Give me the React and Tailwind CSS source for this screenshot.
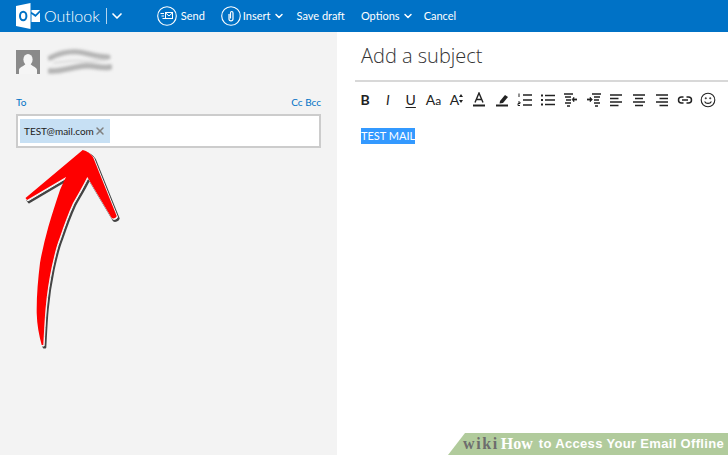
import React from "react";
import { ChevronDown, X } from "lucide-react";

const font = { fontFamily: 'Lato, "Liberation Sans", sans-serif' };
const openSans = { fontFamily: '"Open Sans", "Liberation Sans", sans-serif' };
const serif = { fontFamily: '"Liberation Serif", serif' };

function Logo() {
  return (
    <svg width="24" height="28" viewBox="0 0 24 28" className="shrink-0">
      <path d="M0 4 L14.5 1 V27 L0 24Z" fill="#fff" />
      <path d="M15.5 8 H24 L19.5 12.5 L15.5 10Z" fill="#fff" />
      <path d="M15.5 12 L19.5 15 L24 10.5 V20 H15.5Z" fill="#fff" />
      <ellipse cx="7.2" cy="14" rx="3.2" ry="4.3" fill="none" stroke="#0072c6" strokeWidth="2" />
    </svg>
  );
}

function SendIcon() {
  return (
    <svg width="20" height="20" viewBox="0 0 20 20" fill="none" stroke="#fff" className="shrink-0">
      <circle cx="10" cy="10" r="9.3" strokeWidth="1.1" />
      <rect x="8.5" y="6.5" width="7" height="6" strokeWidth="1" />
      <path d="M8.5 6.8 L12 10 L15.5 6.8 M3.5 7.5H7M4.5 10H7M5.5 12.5H8" strokeWidth="1" />
    </svg>
  );
}

function ClipIcon() {
  return (
    <svg width="20" height="20" viewBox="0 0 20 20" fill="none" stroke="#fff" className="shrink-0">
      <circle cx="10" cy="10" r="9.3" strokeWidth="1.1" />
      <path d="M8 8 V13 C8 15.4 12 15.4 12 13 V7 C12 5 9.5 5 9.5 7 V12.5" strokeWidth="1.2" />
    </svg>
  );
}

function Header() {
  return (
    <header className="h-8 bg-[#0072c6] flex items-center text-white text-[11px] shrink-0 pl-4">
      <Logo />
      <span className="ml-1 text-base font-light">Outlook</span>
      <span className="ml-1.5 w-px h-4 bg-white/70" />
      <ChevronDown className="ml-0.5 w-4 h-4" strokeWidth={2.5} />
      <span className="ml-8 flex items-center gap-1"><SendIcon /><span>Send</span></span>
      <span className="ml-4 flex items-center gap-0.5"><ClipIcon /><span>Insert</span><ChevronDown className="w-3 h-3" strokeWidth={3} /></span>
      <span className="ml-3">Save draft</span>
      <span className="ml-4 flex items-center gap-0.5"><span>Options</span><ChevronDown className="w-3 h-3" strokeWidth={3} /></span>
      <span className="ml-2.5">Cancel</span>
    </header>
  );
}

function Avatar() {
  return (
    <svg width="24" height="24" viewBox="0 0 24 24" className="shrink-0">
      <rect width="24" height="24" fill="#8a8a8a" />
      <ellipse cx="12" cy="9.5" rx="4.6" ry="5.5" fill="#f5f5f5" />
      <path d="M3 24 V20 C3 17 8 16.5 9.5 14 H14.5 C16 16.5 21 17 21 20 V24Z" fill="#f5f5f5" />
    </svg>
  );
}

function Smudge() {
  return (
    <svg width="64" height="28" viewBox="0 0 64 28" className="blur-[1.5px]" fill="none" stroke="#b4b4b4" strokeLinecap="round">
      <path d="M2 10 C10 6 18 3 30 4 C40 5 48 9 60 9" strokeWidth="5" />
      <path d="M6 15 C16 14 24 12 36 13 C44 14 50 12 58 12" strokeWidth="1.5" stroke="#d4d4d4" />
      <path d="M2 23 C12 24 24 19 36 18 C46 17 54 21 62 19" strokeWidth="5.5" />
    </svg>
  );
}

function Arrow() {
  const d = "M82.7 150 C87 151 91 154 93 157 L116.7 216 C116.5 218 113 219 111.7 218 L87.3 177 C83 186 78 194 73 203 C68 214 64 225 60 237 C56 247 54 257 51.7 267 C49 280 47 293 45.7 307 C44.5 320 44 333 43.3 345 L41.7 345 C39 335 37 325 36.7 313 C36.5 296 38 280 40 263 C42 251 45 239 48.3 227 C52 214 56 202 60 190 C62 185 64 181 66 177 L27 200 L25.5 198 Z";
  return (
    <svg className="absolute left-0 top-0 pointer-events-none" width="140" height="360" viewBox="0 0 140 360" fill="none">
      <path d={d} fill="#444" stroke="#444" strokeWidth="2" strokeLinejoin="round" transform="translate(2 2.5)" />
      <path d={d} fill="#f7f7f7" stroke="#f7f7f7" strokeWidth="1" strokeLinejoin="round" transform="translate(0.8 1)" />
      <path d={d} fill="#fe0000" />
    </svg>
  );
}

function Glyph({ children }) {
  return <span className="w-4 h-4 flex items-center justify-center shrink-0 text-[#222]">{children}</span>;
}

function Icon({ children }) {
  return (
    <svg width="16" height="16" viewBox="0 0 16 16" fill="none" stroke="#222" strokeWidth="1.5" className="shrink-0">
      {children}
    </svg>
  );
}

function Toolbar() {
  return (
    <div className="flex justify-between items-center -ml-1 pr-3 mt-2.5 h-4">
      <Glyph><span className="text-sm font-bold">B</span></Glyph>
      <Glyph><span className="text-sm italic">I</span></Glyph>
      <Glyph><span className="text-sm underline underline-offset-2">U</span></Glyph>
      <Glyph><span className="text-sm">A<span className="text-xs">a</span></span></Glyph>
      <Glyph>
        <span className="text-sm">A</span>
        <svg width="4" height="9" viewBox="0 0 4 9" fill="#222" className="shrink-0 -mt-1"><path d="M0 3 L2 0 L4 3Z M0 6 H4 L2 9Z" /></svg>
      </Glyph>
      <Glyph>
        <svg width="14" height="16" viewBox="0 0 14 16" fill="none" stroke="#222"><path d="M3 10.5 L7 1 L11 10.5 M4.5 7.5 H9.5" strokeWidth="1.4" /><path d="M1 13.5 H13" strokeWidth="2" /></svg>
      </Glyph>
      <Glyph>
        <svg width="16" height="16" viewBox="0 0 16 16" fill="#222"><path d="M6 9 L11 3 L14 5 L9 11 L5.5 11.5Z" /><rect x="2" y="12.5" width="12" height="2" /></svg>
      </Glyph>
      <Icon>
        <path d="M6 3H15M6 8H15M6 13H15" />
        <path d="M2 1.5V5M1 10H3V11.5H1V13.5H3" strokeWidth="1" />
      </Icon>
      <Icon>
        <path d="M5 3.5H15M5 8H15M5 12.5H15" />
        <path d="M1 3.5H3M1 8H3M1 12.5H3" strokeWidth="2" />
      </Icon>
      <Icon>
        <path d="M1 2H10M2 5H8M3 8H8M2 11H8M4 14H7" strokeWidth="1.3" />
        <path d="M10.5 7.5H14" strokeWidth="1.8" />
        <path d="M11 5V10L9 7.5Z" fill="#222" strokeWidth="0.5" />
      </Icon>
      <Icon>
        <path d="M6 2H15M8 5H14M8 8H13M8 11H14M9 14H12" strokeWidth="1.3" />
        <path d="M1 7.5H4.5" strokeWidth="1.8" />
        <path d="M4 5V10L6.5 7.5Z" fill="#222" strokeWidth="0.5" />
      </Icon>
      <Icon><path d="M2 3H14M2 6.5H10.5M2 10H14M2 13.5H10.5" /></Icon>
      <Icon><path d="M2 3H14M4 6.5H12M2 10H14M4 13.5H12" /></Icon>
      <Icon><path d="M2 3H14M5.5 6.5H14M2 10H14M5.5 13.5H14" /></Icon>
      <Icon>
        <path d="M6.5 5H4.5A3 3 0 0 0 4.5 11H6.5M9.5 5H11.5A3 3 0 0 1 11.5 11H9.5M5 8H11" />
      </Icon>
      <Icon>
        <circle cx="8" cy="8" r="6.8" strokeWidth="1.1" />
        <circle cx="5.8" cy="6.3" r="0.7" fill="#222" strokeWidth="0.5" />
        <circle cx="10.2" cy="6.3" r="0.7" fill="#222" strokeWidth="0.5" />
        <path d="M4.6 9.5C5.8 12 10.2 12 11.4 9.5" strokeWidth="1.1" />
      </Icon>
    </div>
  );
}

function WikiBanner() {
  return (
    <div className="absolute right-0 bottom-0 w-70 h-5.5 flex items-center justify-end pr-1 font-bold whitespace-nowrap">
      <svg className="absolute inset-0 w-full h-full" viewBox="0 0 280 22" preserveAspectRatio="none"><path d="M0 22 L17 0 H280 V22Z" fill="#b1cb9c" /></svg>
      <span className="relative text-base tracking-widest text-[#6d6d6d]" style={serif}>wiki</span>
      <span className="relative text-base ml-0.5 text-white" style={serif}>How</span>
      <span className="relative text-[13px] tracking-wide text-white ml-1.5" style={{ fontFamily: '"Liberation Sans", sans-serif' }}>to Access Your Email Offline</span>
    </div>
  );
}

export default function App() {
  return (
    <div className="relative w-[728px] h-[455px] overflow-hidden bg-white flex flex-col" style={font}>
      <Header />
      <main className="flex flex-1">
        <aside className="w-[337px] bg-[#f3f3f3] px-4 pt-4 shrink-0">
          <div className="flex items-center gap-2 h-7">
            <Avatar />
            <Smudge />
          </div>
          <div className="flex justify-between mt-5 text-[#0072c6] text-[10px] leading-3">
            <span>To</span>
            <span>Cc Bcc</span>
          </div>
          <div className="mt-1.5 h-8.5 border-2 border-[#cccccc] bg-white flex items-center px-0.5">
            <span className="h-6 w-[90px] flex items-center justify-between bg-[#c7e0f4] px-1 text-[10px] text-[#222] whitespace-nowrap">
              TEST@mail.com
              <X className="w-3 h-3 text-[#808080]" strokeWidth={3} />
            </span>
          </div>
        </aside>
        <section className="flex-1 flex flex-col">
          <div className="ml-[18px] pl-1.5 pt-2 h-12.5 text-xl leading-8 font-light text-[#333] border-b-2 border-[#d8d8d8]" style={openSans}>Add a subject</div>
          <div className="pl-6 flex flex-col">
            <Toolbar />
            <div className="mt-5 w-fit bg-[#3399ff] text-white text-[11px] leading-4">TEST MAIL</div>
          </div>
        </section>
      </main>
      <Arrow />
      <WikiBanner />
    </div>
  );
}
